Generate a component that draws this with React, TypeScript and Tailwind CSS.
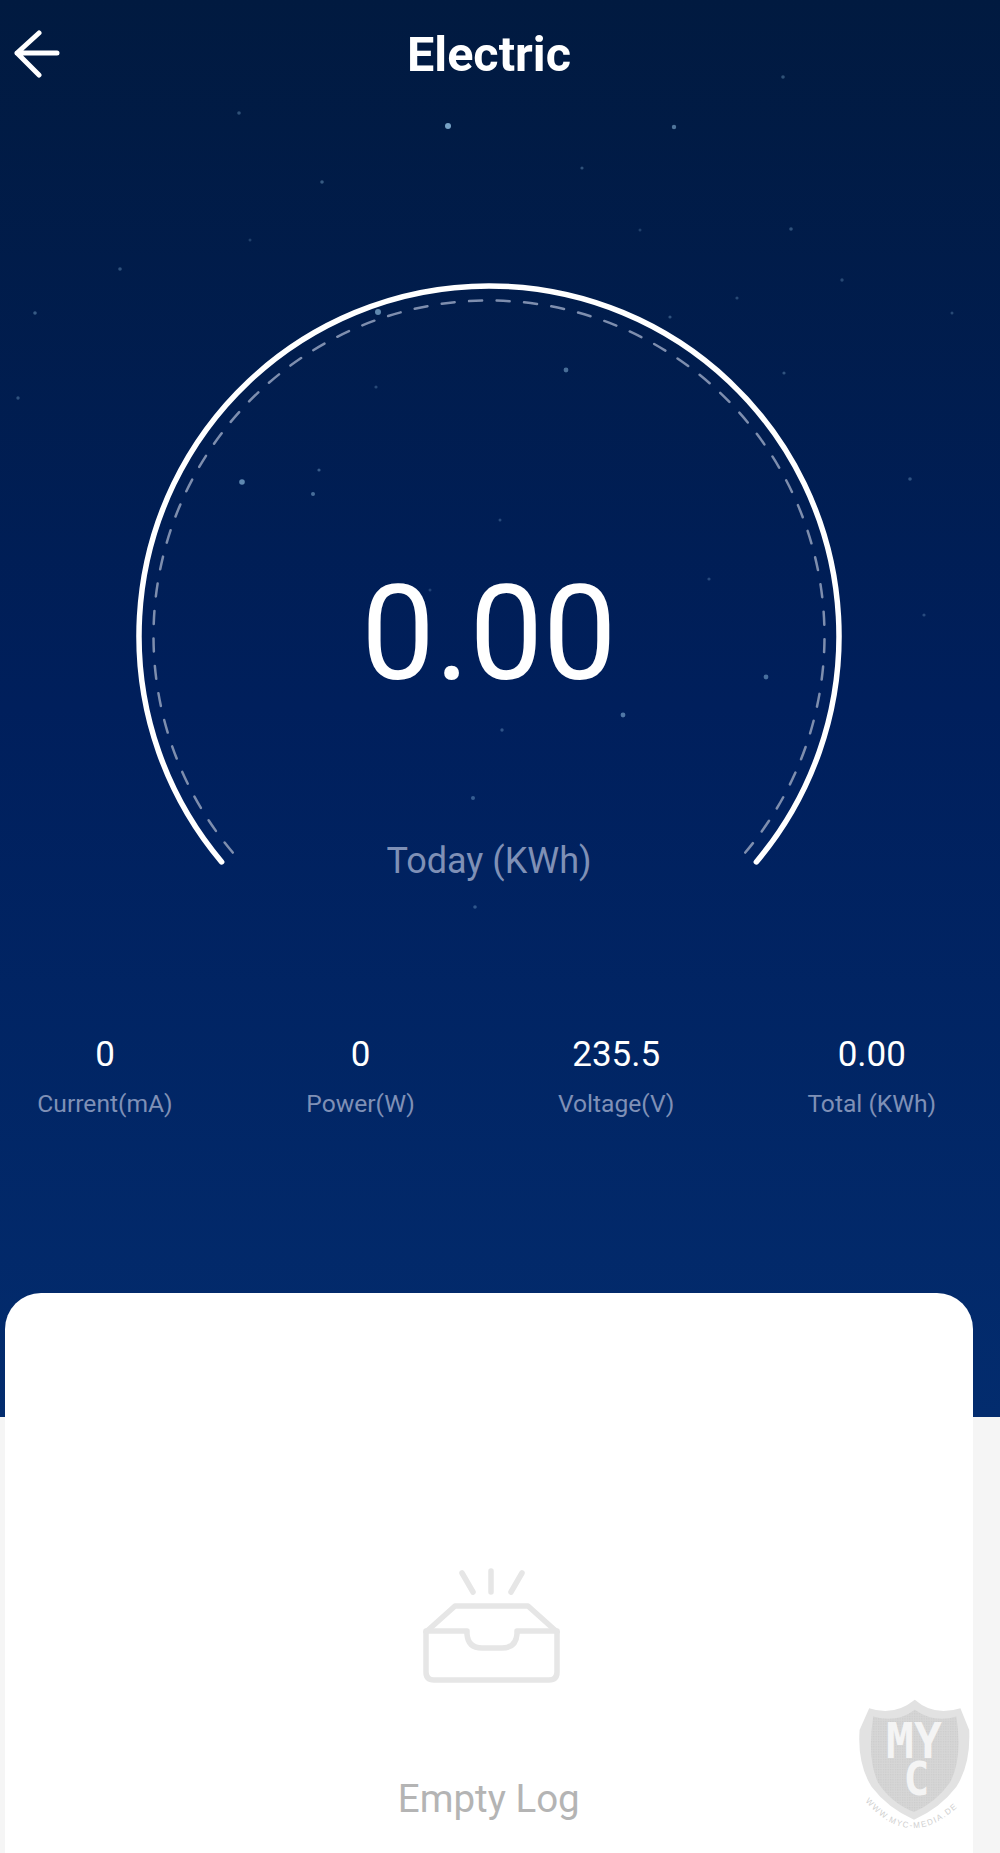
const stars: [number, number, number, number][] = [
  [448, 126, 3, 0.75], [674, 127, 2.2, 0.5], [239, 113, 1.8, 0.3], [783, 77, 1.8, 0.3], [582, 168, 1.6, 0.3],
  [322, 182, 1.8, 0.35], [791, 229, 1.8, 0.3], [120, 269, 1.8, 0.3], [842, 280, 1.7, 0.25], [35, 313, 1.8, 0.35],
  [378, 312, 3, 0.6], [566, 370, 2.4, 0.45], [670, 317, 1.6, 0.3], [784, 373, 1.6, 0.3], [376, 387, 1.6, 0.25],
  [737, 298, 1.6, 0.25], [242, 482, 2.8, 0.6], [313, 494, 2, 0.45], [319, 470, 1.6, 0.35], [623, 715, 2.4, 0.5],
  [766, 677, 2.4, 0.45], [473, 798, 2, 0.35], [475, 907, 1.8, 0.3], [910, 479, 1.8, 0.3], [502, 730, 1.7, 0.3],
  [18, 398, 1.7, 0.3], [709, 579, 1.6, 0.25], [924, 615, 1.6, 0.25], [500, 520, 1.5, 0.25], [952, 313, 1.5, 0.25],
  [430, 590, 1.5, 0.2], [250, 240, 1.5, 0.2], [640, 230, 1.5, 0.2],
];

const R_OUT = 350;
const R_IN = 335.5;
const cx = 489;
const cy = 365;
const a = (40.2 * Math.PI) / 180;
const arc = (r: number) =>
  `M ${cx - r * Math.cos(a)} ${cy + r * Math.sin(a)} A ${r} ${r} 0 1 1 ${cx + r * Math.cos(a)} ${cy + r * Math.sin(a)}`;

function Stat({ value, label }: { value: string; label: string }) {
  return (
    <div className="flex w-[200px] flex-col items-center">
      <div className="text-[35px] leading-[40px] text-white">{value}</div>
      <div className="mt-[13px] text-[24.6px] leading-[32px] text-[#7f90b6]">{label}</div>
    </div>
  );
}

function Shield() {
  return (
    <svg width="120" height="142" viewBox="0 0 150 168" preserveAspectRatio="none" className="absolute bottom-[13px] right-[26px]">
      <defs>
        <pattern id="mesh" width="3" height="3" patternUnits="userSpaceOnUse">
          <rect width="3" height="3" fill="#d6d6d6" />
          <rect width="1.5" height="1.5" fill="#cccccc" />
        </pattern>
        <path id="curve" d="M 14 122 Q 72 186 137 122" />
      </defs>
      <path
        d="M 19 12 L 7 38 Q 4 78 22 105 Q 42 130 75 144 Q 108 130 128 105 Q 146 78 144 38 L 133 12 Q 100 22 76 2 Q 50 22 19 12 Z"
        fill="#e2e2e2"
      />
      <path
        d="M 24 22 Q 54 30 76 14 Q 100 30 128 22 Q 136 72 120 100 Q 102 124 75 135 Q 46 124 30 100 Q 16 72 24 22 Z"
        fill="url(#mesh)"
      />
      <text x="75" y="71" textAnchor="middle" fontFamily="'DejaVu Sans Mono', monospace" fontWeight="700" fontSize="58" fill="#f4f4f4">
        MY
      </text>
      <text x="78" y="115" textAnchor="middle" fontFamily="'DejaVu Sans Mono', monospace" fontWeight="700" fontSize="54" fill="#f4f4f4">
        C
      </text>
      <text fontFamily="'Liberation Sans', sans-serif" fontSize="10" letterSpacing="1.8" fill="#cfcfcf">
        <textPath href="#curve">WWW.MYC-MEDIA.DE</textPath>
      </text>
    </svg>
  );
}

export default function App() {
  return (
    <div className="relative h-[1853px] w-[1000px] overflow-hidden bg-[#f5f5f5] font-['Roboto',sans-serif]">
      <div className="relative h-[1417px] bg-gradient-to-b from-[#011a40] via-[#001f5c] to-[#032c6e]">
        <svg width="1000" height="1000" className="absolute left-0 top-0">
          {stars.map(([x, y, r, o], i) => (
            <circle key={i} cx={x} cy={y} r={r} fill="#9fd0f0" opacity={o} />
          ))}
        </svg>

        <div className="relative w-[978px]">
          <header className="relative flex h-[108px] items-center justify-center pt-[2px]">
            <svg width="48" height="48" viewBox="0 0 48 48" className="absolute left-[14px] top-[30px]" fill="none" stroke="#fff" strokeWidth="5" strokeLinecap="round" strokeLinejoin="round">
              <path d="M 43 23 H 3 M 25 3 L 3 23 L 25 45" />
            </svg>
            <h1 className="text-[48.5px] font-bold leading-none text-white">Electric</h1>
          </header>

          <div className="relative mt-[163px] h-[640px]">
            <svg width="978" height="640" viewBox="0 0 978 640" fill="none" strokeLinecap="round" className="block">
              <path d={arc(R_OUT)} stroke="#fff" strokeWidth="5.5" />
              <path d={arc(R_IN)} stroke="#7e8eae" strokeWidth="2.5" strokeDasharray="13 14.49" />
            </svg>
            <div className="absolute left-0 right-0 top-[273px] text-center text-[131px] leading-[180px] text-white">0.00</div>
            <div className="absolute left-0 right-0 top-[570px] text-center text-[36px] leading-[40px] text-[#7f90b6]">Today (KWh)</div>
          </div>
        </div>

        <div className="relative mt-[124px] ml-[5px] flex gap-[55.6px]">
          <Stat value="0" label="Current(mA)" />
          <Stat value="0" label="Power(W)" />
          <Stat value="235.5" label="Voltage(V)" />
          <Stat value="0.00" label="Total (KWh)" />
        </div>
      </div>

      <div className="relative ml-[4.5px] mt-[-124px] h-[684px] w-[968.5px] rounded-t-[36px] bg-white">
        <div className="flex flex-col items-center pt-[272px]">
          <svg width="145" height="120" viewBox="416 1565 145 120" fill="none" stroke="#e6e6e6" strokeWidth="5.5" strokeLinecap="round" strokeLinejoin="round">
            <path d="M 462 1573 L 473 1592 M 491 1571 V 1592 M 522 1573 L 511 1592" />
            <path d="M 426 1632 L 455 1606 H 528 L 557 1632" />
            <path d="M 426 1631 H 467 V 1634 Q 468 1648 482 1648 H 502 Q 516 1648 517 1634 V 1631 H 557 V 1672 Q 557 1680 549 1680 H 434 Q 426 1680 426 1672 Z" />
          </svg>
          <div className="mt-[91px] text-[38.5px] leading-[46px] text-[#b4b4b4]">Empty Log</div>
        </div>
      </div>

      <Shield />
    </div>
  );
}
